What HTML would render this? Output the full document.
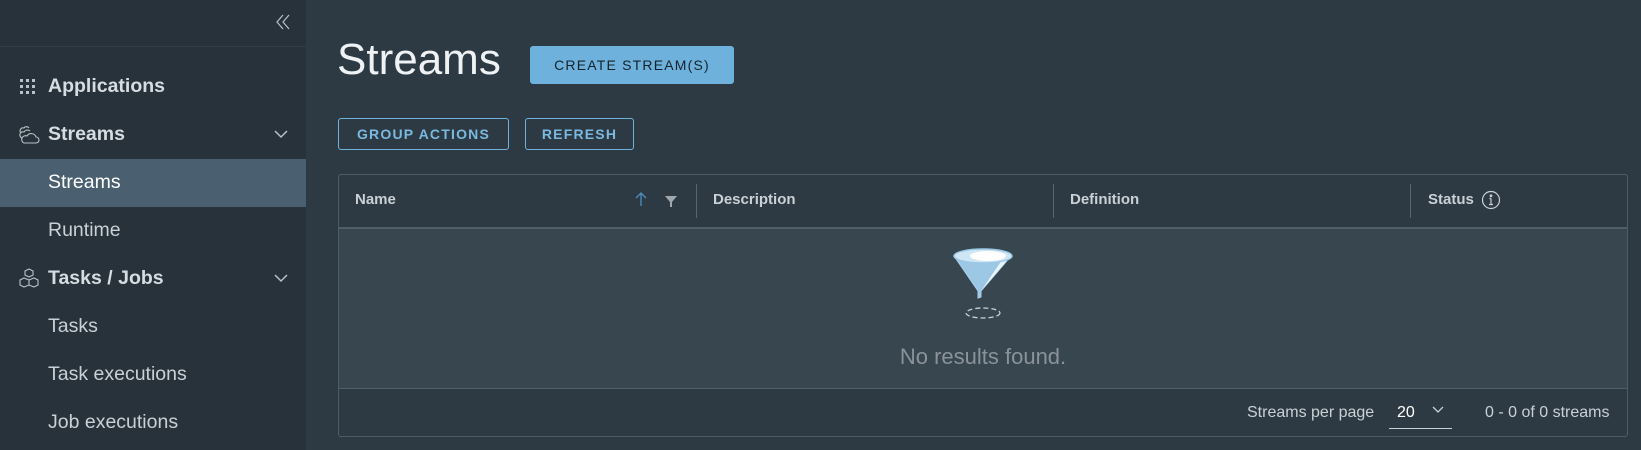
<!DOCTYPE html>
<html><head><meta charset="utf-8"><style>
*{box-sizing:border-box;margin:0;padding:0}
body{width:1641px;height:450px;overflow:hidden;background:#2e3a43;font-family:"Liberation Sans",sans-serif;position:relative}
.side{position:absolute;left:0;top:0;width:306px;height:450px;background:#28323a}
.t{position:absolute;white-space:nowrap}
.nav{left:48px;font-size:19.5px;color:#c9d1d6;line-height:20px}
.b{font-weight:bold;color:#d6dde2}
.btn{position:absolute;border:1px solid #6fb3dc;border-radius:3px;color:#7ab9e0;font-size:14px;letter-spacing:1.2px;font-weight:bold;display:flex;align-items:center;justify-content:center}
.hd{font-size:15px;font-weight:bold;color:#c9d1d6;top:191px}
.sep{position:absolute;top:184px;width:1px;height:34px;background:#566670}
</style></head><body>
<div class="side">
<svg class="t" style="left:274px;top:13px" width="18" height="18" viewBox="0 0 18 18" fill="none" stroke="#b8c2c8" stroke-width="1.2"><path d="M9 2 3 9l6 7M15 2 9 9l6 7"/></svg>
<div style="position:absolute;top:46px;left:0;width:306px;height:1px;background:#323d45"></div>
<svg class="t" style="left:20px;top:79px" width="18" height="16"><g fill="#b8c2c8"><rect x="0" y="0" width="3" height="3"/><rect x="6" y="0" width="3" height="3"/><rect x="12" y="0" width="3" height="3"/><rect x="0" y="6" width="3" height="3"/><rect x="6" y="6" width="3" height="3"/><rect x="12" y="6" width="3" height="3"/><rect x="0" y="12" width="3" height="3"/><rect x="6" y="12" width="3" height="3"/><rect x="12" y="12" width="3" height="3"/></g></svg>
<div class="t nav b" style="top:76px">Applications</div>
<svg class="t" style="left:18px;top:124px" width="22" height="22" viewBox="0 0 22 22" fill="none" stroke="#b8c2c8" stroke-width="1.1"><path d="M6 19h12a3 3 0 0 0 0-6 5 5 0 0 0-9-1 3.5 3.5 0 0 0-3 7z"/><path d="M4 14a3 3 0 0 1 2-6 4 4 0 0 1 6-1"/><path d="M3 9a3 3 0 0 1 3-5 3 3 0 0 1 5 0"/></svg>
<div class="t nav b" style="top:124px">Streams</div>
<svg class="t" style="left:273px;top:128px" width="16" height="12" fill="none" stroke="#b8c2c8" stroke-width="1.5"><path d="M2 3l6 6 6-6"/></svg>
<div style="position:absolute;top:159px;left:0;width:306px;height:48px;background:#4a6070"></div>
<div class="t nav" style="top:172px;color:#fff">Streams</div>
<div class="t nav" style="top:220px">Runtime</div>
<svg class="t" style="left:18px;top:268px" width="22" height="22" viewBox="0 0 22 22" fill="none" stroke="#b8c2c8" stroke-width="1.1"><path d="M7 3l4-2 4 2v4l-4 2-4-2zM2 12l4-2 5 2v5l-5 2-4-2zM11 12l5-2 4 2v5l-4 2-5-2z"/></svg>
<div class="t nav b" style="top:268px">Tasks / Jobs</div>
<svg class="t" style="left:273px;top:272px" width="16" height="12" fill="none" stroke="#b8c2c8" stroke-width="1.5"><path d="M2 3l6 6 6-6"/></svg>
<div class="t nav" style="top:316px">Tasks</div>
<div class="t nav" style="top:364px">Task executions</div>
<div class="t nav" style="top:412px">Job executions</div>
</div>
<div class="t" style="left:337px;top:35px;font-size:44px;color:#eef2f4;line-height:50px">Streams</div>
<div class="btn" style="left:530px;top:46px;width:204px;height:38px;background:#6db1dc;border-color:#6db1dc;color:#16232b;font-weight:normal">CREATE STREAM(S)</div>
<div class="btn" style="left:338px;top:118px;width:171px;height:32px">GROUP ACTIONS</div>
<div class="btn" style="left:525px;top:118px;width:109px;height:32px">REFRESH</div>
<div style="position:absolute;left:338px;top:174px;width:1290px;height:263px;border:1px solid #4d5c66;border-radius:3px;background:#2e3a43;overflow:hidden">
<div style="position:absolute;left:0;top:52px;width:100%;height:162px;background:#37464f;border-top:2px solid #4f5e68;border-bottom:1px solid #4f5e68"></div>
</div>
<div class="t hd" style="left:355px">Name</div>
<svg class="t" style="left:634px;top:191px" width="14" height="16" fill="none" stroke="#4a8fc0" stroke-width="1.3"><path d="M7 15V2M2 7l5-5 5 5"/></svg>
<svg class="t" style="left:665px;top:196px" width="13" height="11"><path d="M0 0h12L7 6v5H5V6z" fill="#a0a8ad"/></svg>
<div class="sep" style="left:696px"></div>
<div class="t hd" style="left:713px">Description</div>
<div class="sep" style="left:1053px"></div>
<div class="t hd" style="left:1070px">Definition</div>
<div class="sep" style="left:1410px"></div>
<div class="t hd" style="left:1428px">Status</div>
<svg class="t" style="left:1481px;top:190px" width="20" height="20" fill="none" stroke="#c9d1d6" stroke-width="1.2"><circle cx="10" cy="10" r="8.5"/><path d="M10 8.5v6M8 14.5h4M8.5 8.5H10"/><circle cx="10" cy="5.8" r=".8" fill="#c9d1d6"/></svg>
<svg class="t" style="left:950px;top:246px" width="66" height="74" viewBox="0 0 66 74">
<path d="M4 10 L28 45 V52 L31 51 V45 L61 10" fill="#9cc8e6" stroke="#a8d0ec" stroke-width="1"/>
<path d="M31 45 L52 14 L61 10 Z" fill="#e8f4fb"/>
<ellipse cx="33" cy="10" rx="29" ry="7" fill="#cfe6f5" stroke="#9cc8e6" stroke-width="1.5"/>
<ellipse cx="38" cy="10" rx="18" ry="5" fill="#fff"/>
<ellipse cx="33" cy="67" rx="17" ry="5" fill="none" stroke="#c8d2d8" stroke-width="1.3" stroke-dasharray="5 3"/>
</svg>
<div class="t" style="left:833px;top:344px;width:300px;text-align:center;font-size:22px;color:#8a9399">No results found.</div>
<div class="t" style="left:1247px;top:404px;font-size:16px;color:#c9d1d6">Streams per page</div>
<div class="t" style="left:1397px;top:404px;font-size:16px;color:#fff">20</div>
<svg class="t" style="left:1432px;top:405px" width="12" height="9" fill="none" stroke="#c9d1d6" stroke-width="1.3"><path d="M1 2l5 5 5-5"/></svg>
<div style="position:absolute;left:1389px;top:428px;width:63px;height:1px;background:#c9d1d6"></div>
<div class="t" style="left:1485px;top:404px;font-size:16px;color:#c9d1d6">0 - 0 of 0 streams</div>
</body></html>
